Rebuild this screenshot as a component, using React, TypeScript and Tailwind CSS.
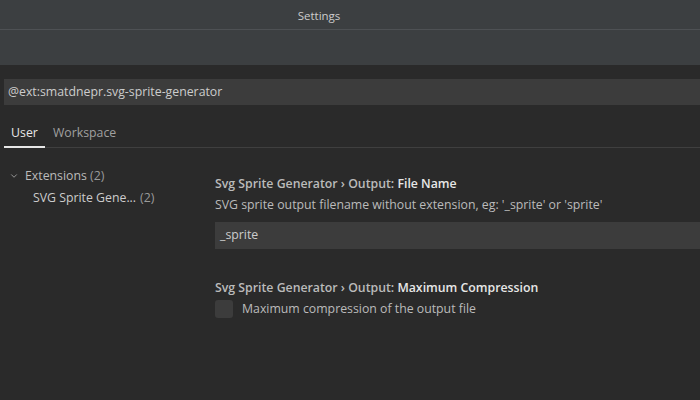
import { ChevronDown } from 'lucide-react'

const font = { fontFamily: '"Segoe UI", "Open Sans", "Noto Sans", sans-serif' }

function SettingTitle({ label }: { label: string }) {
  return (
    <div className="text-[12.3px] font-semibold leading-[18px] text-[#bbbbbb]">
      Svg Sprite Generator › Output: <span className="text-[#e7e7e7]">{label}</span>
    </div>
  )
}

export default function App() {
  return (
    <div className="w-[700px] h-[400px] overflow-hidden bg-[#2a2a2a] text-[#cccccc]" style={font}>
      {/* title bar */}
      <div className="h-[29px] bg-[#3c3f41] flex items-center justify-center pr-[62px] pt-[2px] text-[11.5px] text-[#cccccc]">
        Settings
      </div>
      <div className="h-px bg-[#4e5154]" />
      <div className="h-[35px] bg-[#3c3f41]" />

      {/* search */}
      <div className="pt-[14px] pl-[4px]">
        <div className="h-[26px] bg-[#3c3c3c] flex items-center pl-[4px] text-[12.3px] text-[#cccccc]">
          @ext:smatdnepr.svg-sprite-generator
        </div>
      </div>

      {/* tabs */}
      <div className="mt-[14px] ml-[4px] flex items-end border-b border-[#3f3f3f] h-[29px]">
        <div className="w-[41px] h-full flex items-center justify-center text-[12.3px] text-[#e7e7e7] border-b-2 border-[#e7e7e7] -mb-px">
          User
        </div>
        <div className="h-full flex items-center pl-[8px] text-[12.3px] text-[#a0a0a0]">Workspace</div>
      </div>

      <div className="flex">
        {/* tree */}
        <div className="w-[215px] pt-[17px] text-[12.3px]">
          <div className="flex items-center h-[22px] pl-[9px] text-[#bbbbbb]">
            <ChevronDown className="w-[10px] h-[10px] mr-[6px] text-[#aaaaaa]" strokeWidth={2} />
            <span>Extensions <span className="text-[#9a9a9a]">(2)</span></span>
          </div>
          <div className="flex items-center h-[22px] pl-[33px] text-[#cccccc]">
            SVG Sprite Gene... <span className="ml-1 text-[#9a9a9a]">(2)</span>
          </div>
        </div>

        {/* settings list */}
        <div className="flex-1 pt-[27px]">
          <SettingTitle label="File Name" />
          <div className="mt-[3px] text-[12.3px] leading-[18px] text-[#bbbbbb]">
            SVG sprite output filename without extension, eg: '_sprite' or 'sprite'
          </div>
          <div className="mt-[8px] h-[27px] bg-[#3c3c3c] flex items-center pl-[5px] text-[12.3px] text-[#cccccc]">
            _sprite
          </div>

          <div className="mt-[30px]">
            <SettingTitle label="Maximum Compression" />
          </div>
          <div className="mt-[3px] flex items-center">
            <div className="w-[18px] h-[18px] rounded-[3px] bg-[#3c3c3c]" />
            <span className="ml-[9px] text-[12.3px] text-[#bbbbbb]">Maximum compression of the output file</span>
          </div>
        </div>
      </div>
    </div>
  )
}
